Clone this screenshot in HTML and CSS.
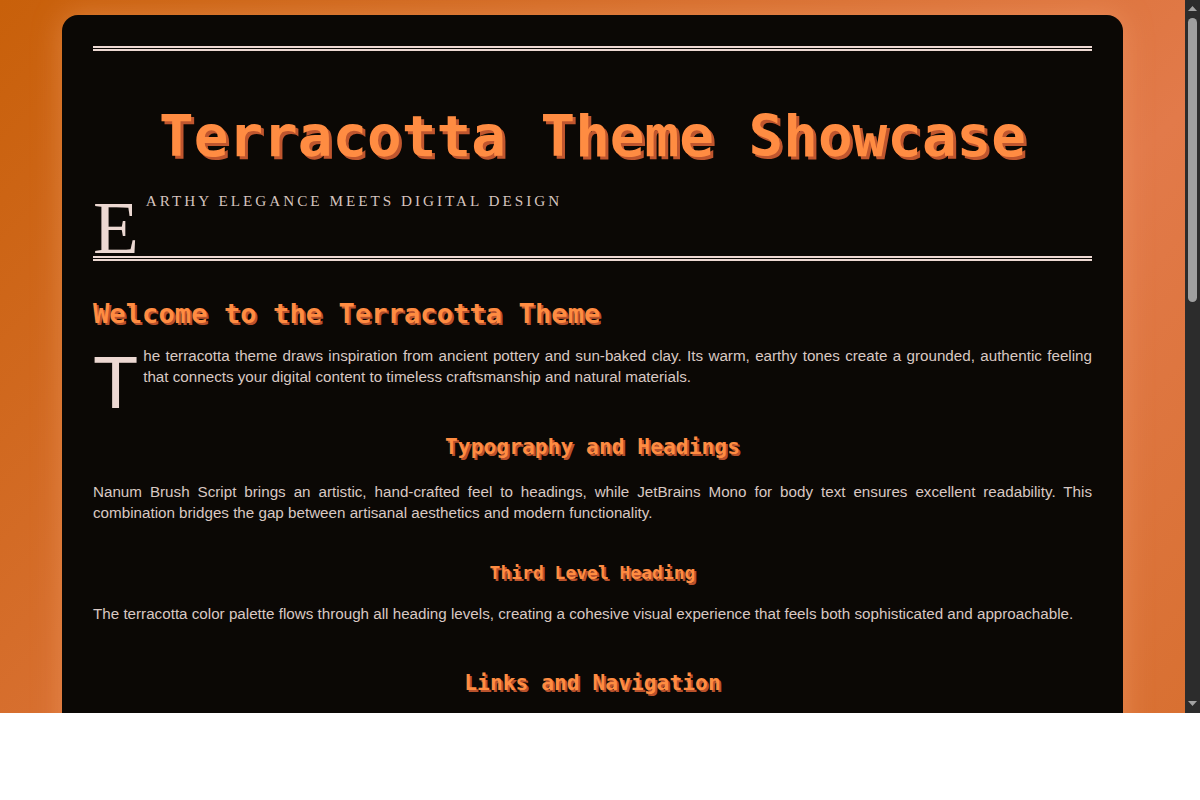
FILE: index.html
```html
<!DOCTYPE html>
<html lang="en">
<head>
<meta charset="utf-8">
<title>Terracotta Theme Showcase</title>
<link rel="stylesheet" href="styles.css">
</head>
<body>
<div class="viewport">
  <div class="page">
    <main class="card">
      <header class="hero">
        <h1 class="hero-title">Terracotta Theme Showcase</h1>
        <p class="tagline">Earthy Elegance Meets Digital Design</p>
      </header>

      <h2 class="intro-title">Welcome to the Terracotta Theme</h2>
      <p class="lead">The terracotta theme draws inspiration from ancient pottery and sun-baked clay. Its warm, earthy tones create a grounded, authentic feeling that connects your digital content to timeless craftsmanship and natural materials.</p>

      <h2 class="section-title">Typography and Headings</h2>
      <p class="body-text">Nanum Brush Script brings an artistic, hand-crafted feel to headings, while JetBrains Mono for body text ensures excellent readability. This combination bridges the gap between artisanal aesthetics and modern functionality.</p>

      <h3 class="sub-title">Third Level Heading</h3>
      <p class="body-text">The terracotta color palette flows through all heading levels, creating a cohesive visual experience that feels both sophisticated and approachable.</p>

      <h2 class="section-title">Links and Navigation</h2>
    </main>
  </div>
  <div class="scrollbar" aria-hidden="true">
    <div class="sb-button sb-up">
      <svg width="15" height="15" viewBox="0 0 15 15"><polygon points="3,11 7.5,6 12,11" fill="#a3a3a3"/></svg>
    </div>
    <div class="sb-track">
      <div class="sb-thumb"></div>
    </div>
    <div class="sb-button sb-down">
      <svg width="15" height="15" viewBox="0 0 15 15"><polygon points="3,3 12,3 7.5,8" fill="#a3a3a3"/></svg>
    </div>
  </div>
</div>
</body>
</html>
```

FILE: styles.css
```css
* {
  box-sizing: border-box;
}

html,
body {
  margin: 0;
  padding: 0;
  background: #ffffff;
}

.viewport {
  display: flex;
  align-items: flex-start;
  height: 713px;
  overflow: hidden;
}

.page {
  flex: 1;
  min-width: 0;
  height: 1690px;
  padding: 15px 62px;
  background: linear-gradient(135deg, #c8600a 0%, #e27a4a 45%, #c8600a 100%);
}

.card {
  display: block;
  min-height: 1660px;
  background: #0b0805;
  border-radius: 16px;
  padding: 31px;
  box-shadow: 0 0 30px rgba(255, 175, 130, 0.38);
  color: #d9c8c3;
  font-family: "Liberation Sans", Arial, sans-serif;
}

.hero {
  display: flow-root;
  border-top: 5px double #ecd8d2;
  border-bottom: 5px double #ecd8d2;
  padding-top: 52px;
}

.hero-title {
  margin: 0 0 19px;
  text-align: center;
  font-family: "DejaVu Sans Mono", monospace;
  font-weight: bold;
  font-size: 57.6px;
  line-height: normal;
  color: #ff8c42;
  text-shadow: 3px 3px 0 #c0562e;
}

.tagline {
  margin: 0;
  font-family: "Liberation Serif", "Times New Roman", serif;
  font-size: 15.2px;
  line-height: 24px;
  text-transform: uppercase;
  letter-spacing: 3px;
  color: #d6c4bf;
}

.tagline::first-letter {
  float: left;
  font-size: 75px;
  line-height: 56px;
  margin: 11px 4px 0 0;
  color: #ecd8d2;
}

.intro-title,
.section-title,
.sub-title {
  font-family: "DejaVu Sans Mono", monospace;
  font-weight: bold;
  line-height: normal;
  color: #ff8c42;
  text-shadow: 2px 2px 0 #b9522c;
}

.intro-title {
  margin: 37px 0 16px;
  font-size: 27.2px;
}

.section-title {
  margin: 46px 0 22px;
  font-size: 21.3px;
  text-align: center;
}

.sub-title {
  margin: 39px 0 20px;
  font-size: 18px;
  text-align: center;
}

.lead,
.body-text {
  margin: 0;
  font-size: 15.2px;
  line-height: 21.3px;
  text-align: justify;
}

.lead::first-letter {
  float: left;
  font-size: 74px;
  line-height: 60px;
  margin: 8px 5px 0 0;
  color: #ecd8d2;
}

.scrollbar {
  align-self: stretch;
  flex: 0 0 15px;
  display: flex;
  flex-direction: column;
  background: #2c2c2c;
}

.sb-button {
  flex: 0 0 15px;
  height: 15px;
}

.sb-button svg {
  display: block;
}

.sb-track {
  flex: 1;
  padding: 3px 3px 0;
}

.sb-thumb {
  height: 284px;
  border-radius: 5px;
  background: #a0a0a0;
}
```
